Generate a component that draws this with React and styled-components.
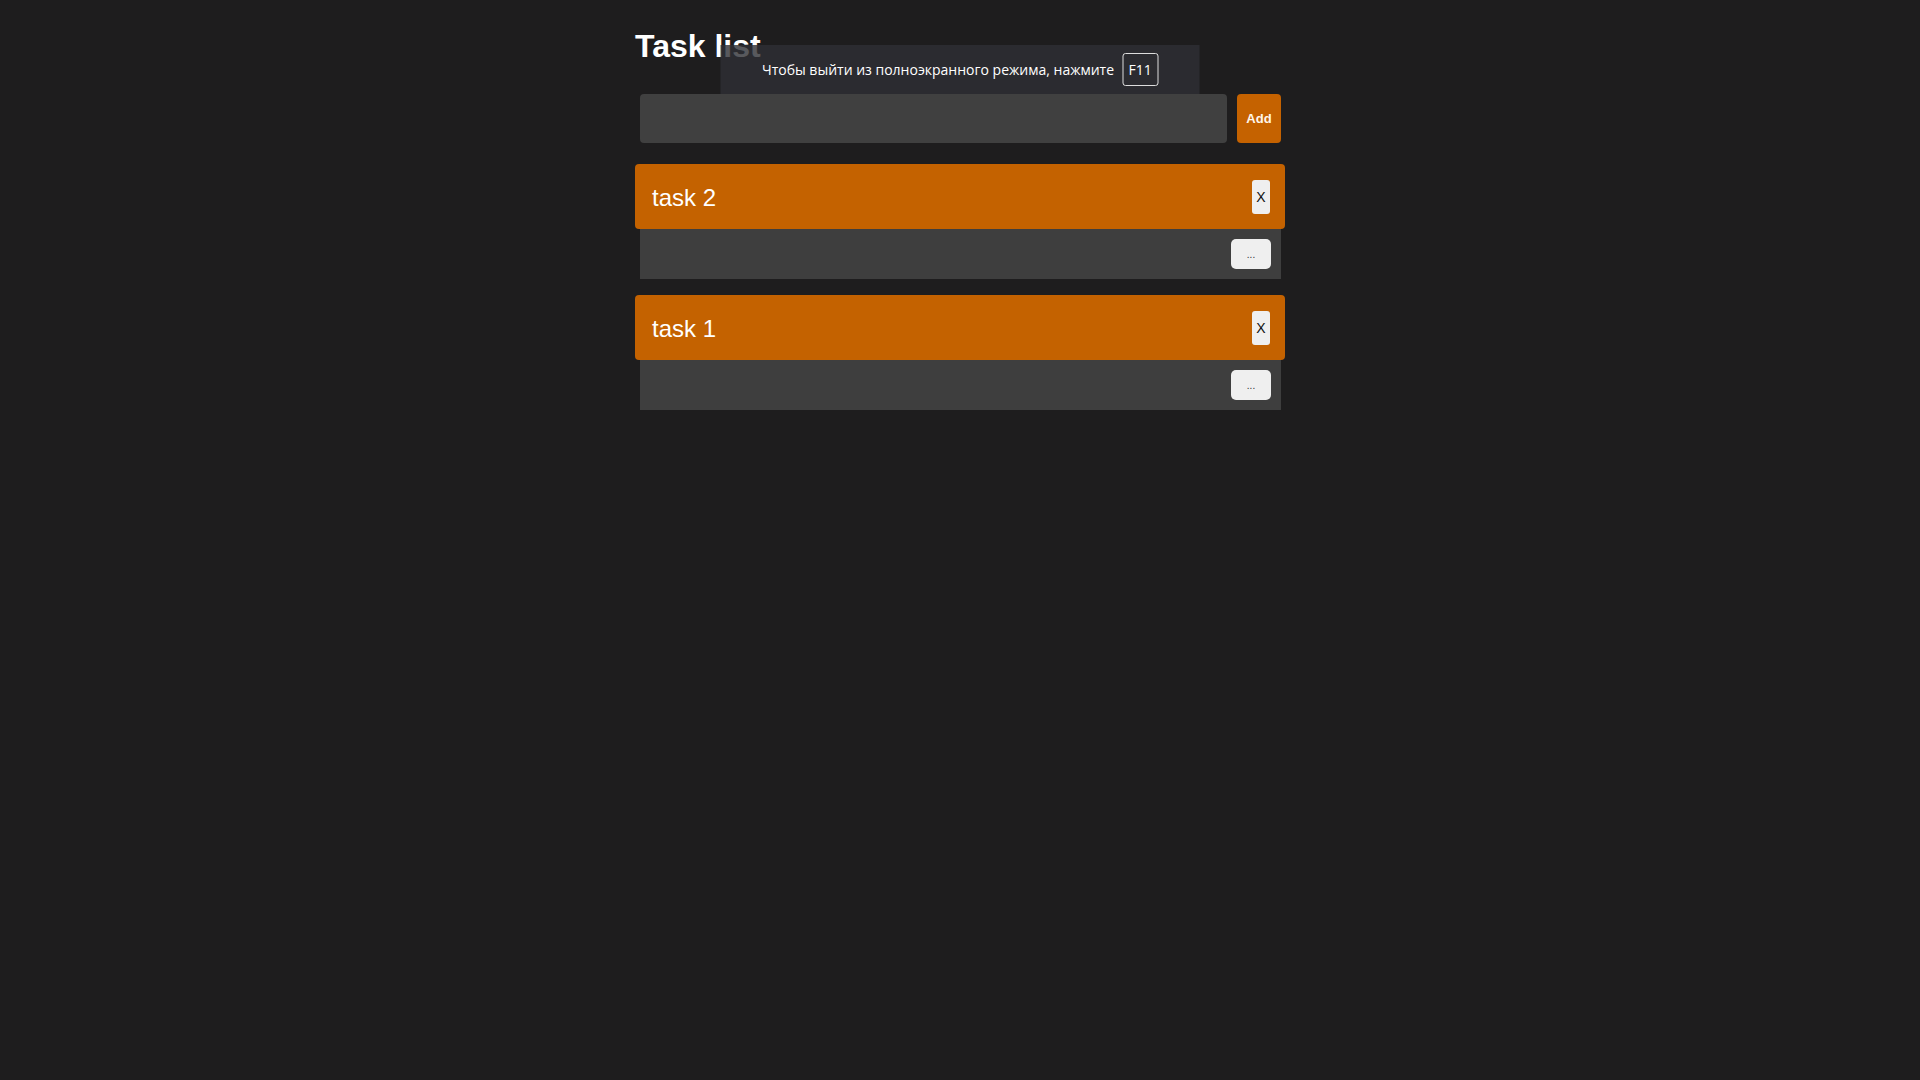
import React, { useState } from "react";
import styled, { createGlobalStyle } from "styled-components";

const GlobalStyle = createGlobalStyle`
  body {
    margin: 0;
    background-color: #1e1d1e;
    font-family: "Liberation Sans", Arial, sans-serif;
    color: #ffffff;
  }
`;

const Page = styled.div`
  position: relative;
  min-height: 1080px;
`;

const Container = styled.div`
  width: 650px;
  margin: 0 auto;
  padding-top: 28px;
`;

const Title = styled.h1`
  font-size: 32px;
  line-height: 37px;
  font-weight: bold;
  margin: 0 0 29px 0;
  color: #ffffff;
`;

const Form = styled.form`
  display: flex;
  gap: 10px;
  height: 49px;
  padding: 0 4px 0 5px;
`;

const Input = styled.input`
  flex: 1;
  background-color: #404040;
  border: none;
  border-radius: 4px;
  color: #ffffff;
  font-size: 16px;
  padding: 0 12px;
  outline: none;
`;

const AddButton = styled.button`
  width: 44px;
  background-color: #c56200;
  color: #fff6ea;
  border: none;
  border-radius: 4px;
  font-family: "Liberation Sans", Arial, sans-serif;
  font-size: 13px;
  font-weight: bold;
  padding: 0;
  cursor: pointer;
`;

const List = styled.ul`
  list-style: none;
  margin: 21px 0 0 0;
  padding: 0;
  display: flex;
  flex-direction: column;
  gap: 16px;
`;

const Item = styled.li`
  display: flex;
  flex-direction: column;
`;

const Card = styled.div`
  display: flex;
  align-items: center;
  justify-content: space-between;
  height: 65px;
  padding: 0 15px 0 17px;
  background-color: #c46200;
  border-radius: 4px;
`;

const TaskName = styled.span`
  font-size: 24px;
  color: #ffffff;
  padding-top: 3px;
`;

const RemoveButton = styled.button`
  width: 18px;
  height: 34px;
  padding: 0;
  border: none;
  border-radius: 3px;
  background-color: #efefef;
  color: #111111;
  font-family: "Liberation Sans", Arial, sans-serif;
  font-size: 14px;
  cursor: pointer;
`;

const Details = styled.div`
  display: flex;
  justify-content: flex-end;
  height: 50px;
  margin: 0 4px 0 5px;
  padding: 10px 10px 0 0;
  box-sizing: border-box;
  background-color: #3e3e3e;
`;

const MoreButton = styled.button`
  width: 40px;
  height: 30px;
  border: none;
  border-radius: 5px;
  background-color: #efefef;
  color: #333333;
  font-size: 10px;
  padding: 0;
  cursor: pointer;
`;

const FullscreenNotice = styled.div`
  position: absolute;
  top: 45px;
  left: 50%;
  transform: translateX(-50%);
  width: 479px;
  height: 49px;
  box-sizing: border-box;
  display: flex;
  align-items: center;
  justify-content: center;
  gap: 8px;
  background-color: rgba(46, 48, 52, 0.8);
  font-family: "Open Sans", "Noto Sans", sans-serif;
  font-size: 14px;
  color: #ffffff;
`;

const Key = styled.span`
  display: inline-flex;
  align-items: center;
  justify-content: center;
  width: 36px;
  height: 33px;
  box-sizing: border-box;
  border: 1px solid #dddddd;
  border-radius: 3px;
  font-size: 14px;
`;

export default function App() {
  const [tasks] = useState(["task 2", "task 1"]);

  return (
    <Page>
      <GlobalStyle />
      <Container>
        <Title>Task list</Title>
        <Form onSubmit={(e) => e.preventDefault()}>
          <Input type="text" />
          <AddButton type="submit">Add</AddButton>
        </Form>
        <List>
          {tasks.map((t) => (
            <Item key={t}>
              <Card>
                <TaskName>{t}</TaskName>
                <RemoveButton>X</RemoveButton>
              </Card>
              <Details>
                <MoreButton>...</MoreButton>
              </Details>
            </Item>
          ))}
        </List>
      </Container>
      <FullscreenNotice>
        <span>Чтобы выйти из полноэкранного режима, нажмите</span>
        <Key>F11</Key>
      </FullscreenNotice>
    </Page>
  );
}
